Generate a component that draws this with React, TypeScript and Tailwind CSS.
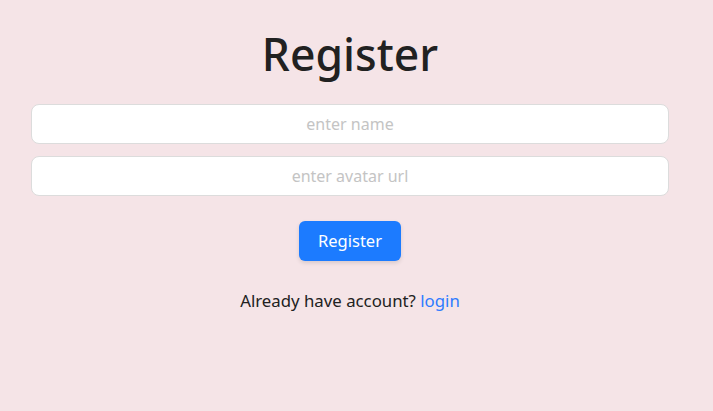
export default function App() {
  return (
    <div className="min-h-[411px] w-full bg-[#f5e4e7] font-['Noto_Sans',sans-serif]">
      <div className="w-[700px] px-[31px] pt-[24px] flex flex-col items-center">
        <h1 className="text-[44.5px] leading-[60px] font-medium text-[#212121]">Register</h1>
        <input
          className="mt-[20px] w-full h-[40px] rounded-[8px] border border-[#dcdcdc] bg-white text-center text-[16px] placeholder:text-[#c4c4c4] outline-none"
          placeholder="enter name"
        />
        <input
          className="mt-[12px] w-full h-[40px] rounded-[8px] border border-[#dcdcdc] bg-white text-center text-[16px] placeholder:text-[#c4c4c4] outline-none"
          placeholder="enter avatar url"
        />
        <button className="mt-[25px] w-[102px] h-[40px] rounded-[6px] bg-[#1c7bff] text-white text-[16.5px] shadow-[0_2px_4px_rgba(0,0,0,0.12)]">
          Register
        </button>
        <p className="mt-[27px] text-[16.8px] text-[#212121]">
          Already have account? <a className="text-[#2e7bff]">login</a>
        </p>
      </div>
    </div>
  );
}
